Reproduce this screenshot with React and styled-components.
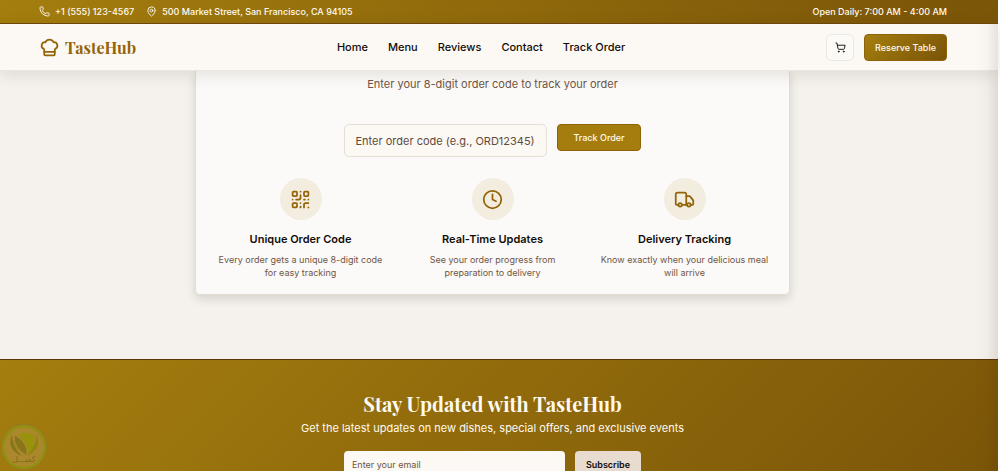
import styled, { createGlobalStyle } from "styled-components";
import {
  ChefHat,
  Clock,
  MapPin,
  Phone,
  QrCode,
  ShoppingCart,
  Truck,
} from "lucide-react";

const GlobalStyle = createGlobalStyle`
  * {
    box-sizing: border-box;
  }
  html {
    scrollbar-width: none;
  }
  body {
    margin: 0;
    background-color: #ffffff;
    color: #120d08;
    font-family: Inter, "Liberation Sans", sans-serif;
    font-size: 11px;
  }
  h2, h3, p {
    margin: 0;
  }
  a {
    color: inherit;
    text-decoration: none;
  }
  button, input {
    font-family: inherit;
  }
`;

const brandGradient = "linear-gradient(135deg, #a47e0e, #7a5408)";

const Page = styled.div`
  position: relative;
  margin-right: 2px;
  background-color: #f5f2ed;
`;

const EdgeShade = styled.div`
  position: fixed;
  top: 24px;
  right: 2px;
  bottom: 0;
  width: 24px;
  background: linear-gradient(to right, transparent, rgba(40, 30, 10, 0.02) 50%, rgba(40, 30, 10, 0.1));
  pointer-events: none;
`;

const TopBar = styled.div`
  display: flex;
  justify-content: space-between;
  align-items: center;
  height: 24px;
  padding: 0 51px 0 39px;
  border-bottom: 1px solid #70480c;
  background: ${brandGradient};
  color: #fffaf0;
  font-size: 9px;
  font-weight: 500;
`;

const Contacts = styled.div`
  display: flex;
  gap: 12px;
`;

const Contact = styled.a`
  display: flex;
  align-items: center;
  gap: 5px;
`;

const SHeader = styled.header`
  position: relative;
  display: flex;
  justify-content: space-between;
  align-items: center;
  height: 47px;
  padding: 0 51px 0 39px;
  border-bottom: 1px solid #ebe7de;
  background-color: #fcf9f5;
  box-shadow: 0 4px 16px rgba(50, 40, 20, 0.12);
`;

const Brand = styled.a`
  display: flex;
  align-items: center;
  gap: 5px;
  color: #946409;
  font-family: "Playfair Display", "Liberation Serif", serif;
  font-size: 16px;
  font-weight: 700;
`;

const Nav = styled.nav`
  display: flex;
  gap: 20px;
  font-weight: 500;
`;

const Actions = styled.div`
  display: flex;
  gap: 10px;
`;

const CartButton = styled.button`
  display: flex;
  align-items: center;
  justify-content: center;
  width: 28px;
  height: 27px;
  padding: 0;
  border: 1px solid #ece8e1;
  border-radius: 5px;
  background-color: #fcfaf7;
  color: #120d08;
`;

const Button = styled.button`
  height: 27px;
  padding: 0 ${(props) => props.$pad}px;
  border: 1px solid #8f620a;
  border-radius: 4px;
  background: ${(props) => props.$bg};
  color: #fffaf0;
  font-size: 9px;
  font-weight: 500;
`;

const TrackSection = styled.section`
  display: flex;
  justify-content: center;
  padding: 0 13px 64px 0;
`;

const Card = styled.div`
  width: 100%;
  max-width: 595px;
  padding: 5px 19px 15px;
  border: 1px solid #e2ddd3;
  border-top: none;
  border-radius: 0 0 5px 5px;
  background-color: #fcfaf9;
  box-shadow: 0 4px 10px rgba(50, 40, 20, 0.16);
  text-align: center;
`;

const Lead = styled.p`
  color: #6f5644;
  line-height: 16px;
`;

const TrackForm = styled.form`
  display: flex;
  justify-content: center;
  align-items: flex-start;
  gap: 10px;
  margin-top: 32px;
`;

const CodeInput = styled.input`
  width: 203px;
  height: 33px;
  padding: 0 10px;
  border: 1px solid #e6dfd5;
  border-radius: 5px;
  background-color: #fcf8f4;
  font-size: 11px;
  &::placeholder {
    color: #5f4a3c;
    opacity: 1;
  }
`;

const Features = styled.div`
  display: grid;
  grid-template-columns: repeat(3, 1fr);
  gap: 21px;
  margin-top: 21px;
`;

const Feature = styled.div`
  display: flex;
  flex-direction: column;
  align-items: center;
`;

const IconCircle = styled.div`
  display: flex;
  align-items: center;
  justify-content: center;
  width: 42px;
  height: 42px;
  border-radius: 50%;
  background-color: #f3ede0;
  color: #946409;
`;

const FeatureTitle = styled.h3`
  margin-top: 11px;
  font-size: 11px;
  font-weight: 600;
  line-height: 16px;
`;

const FeatureText = styled.p`
  margin-top: 6px;
  color: #6f5644;
  font-size: 9px;
  line-height: 13px;
`;

const Newsletter = styled.section`
  display: flex;
  flex-direction: column;
  align-items: center;
  padding: 31px 13px 43px 0;
  border-top: 1px solid #5c3408;
  background: ${brandGradient};
  color: #fffaf0;
`;

const NewsletterTitle = styled.h2`
  font-family: "Playfair Display", "Liberation Serif", serif;
  font-size: 20px;
  font-weight: 700;
  line-height: 26px;
`;

const NewsletterText = styled.p`
  line-height: 16px;
  margin-top: 3px;
`;

const NewsletterForm = styled.form`
  display: flex;
  gap: 10px;
  margin-top: 15px;
`;

const EmailInput = styled.input`
  width: 221px;
  height: 27px;
  padding: 0 8px;
  border: none;
  border-radius: 4px;
  background-color: #fcf9f4;
  font-size: 9px;
  &::placeholder {
    color: #6f5644;
    opacity: 1;
  }
`;

const SubscribeButton = styled.button`
  height: 27px;
  padding: 0 11px;
  border: none;
  border-radius: 4px;
  background-color: #e8dbd0;
  color: #120d08;
  font-size: 9px;
  font-weight: 600;
`;

const Seal = styled.svg`
  position: fixed;
  left: 0;
  bottom: 0;
  opacity: 0.7;
`;

const links = ["Home", "Menu", "Reviews", "Contact", "Track Order"];

const features = [
  {
    icon: QrCode,
    title: "Unique Order Code",
    text: "Every order gets a unique 8-digit code for easy tracking",
  },
  {
    icon: Clock,
    title: "Real-Time Updates",
    text: "See your order progress from preparation to delivery",
  },
  {
    icon: Truck,
    title: "Delivery Tracking",
    text: "Know exactly when your delicious meal will arrive",
  },
];

function App() {
  return (
    <Page>
      <GlobalStyle />
      <TopBar>
        <Contacts>
          <Contact href="tel:+15551234567">
            <Phone size={11} />
            +1 (555) 123-4567
          </Contact>
          <Contact href="#map">
            <MapPin size={11} />
            500 Market Street, San Francisco, CA 94105
          </Contact>
        </Contacts>
        <span>Open Daily: 7:00 AM - 4:00 AM</span>
      </TopBar>
      <SHeader>
        <Brand href="#home">
          <ChefHat size={21} />
          TasteHub
        </Brand>
        <Nav>
          {links.map((link) => (
            <a key={link} href={`#${link}`}>
              {link}
            </a>
          ))}
        </Nav>
        <Actions>
          <CartButton aria-label="Cart">
            <ShoppingCart size={11} />
          </CartButton>
          <Button $pad={10} $bg={brandGradient}>
            Reserve Table
          </Button>
        </Actions>
      </SHeader>
      <TrackSection>
        <Card>
          <Lead>Enter your 8-digit order code to track your order</Lead>
          <TrackForm>
            <CodeInput
              aria-label="Order code"
              placeholder="Enter order code (e.g., ORD12345)"
            />
            <Button type="button" $pad={15} $bg="#a57d0e">
              Track Order
            </Button>
          </TrackForm>
          <Features>
            {features.map(({ icon: Icon, title, text }) => (
              <Feature key={title}>
                <IconCircle>
                  <Icon size={21} />
                </IconCircle>
                <FeatureTitle>{title}</FeatureTitle>
                <FeatureText>{text}</FeatureText>
              </Feature>
            ))}
          </Features>
        </Card>
      </TrackSection>
      <Newsletter>
        <NewsletterTitle>Stay Updated with TasteHub</NewsletterTitle>
        <NewsletterText>
          Get the latest updates on new dishes, special offers, and exclusive
          events
        </NewsletterText>
        <NewsletterForm>
          <EmailInput
            type="email"
            aria-label="Email"
            placeholder="Enter your email"
          />
          <SubscribeButton type="button">Subscribe</SubscribeButton>
        </NewsletterForm>
      </Newsletter>
      <EdgeShade />
      <Seal width="48" height="48" viewBox="0 0 48 48" aria-hidden="true">
        <circle cx="24" cy="24" r="22.5" fill="#a88a30" stroke="#83822a" />
        <circle cx="24" cy="24" r="20.5" fill="#b08d3c" stroke="#8f9a10" strokeWidth="2" />
        <path d="M12 11.5C8 20 11 29 22 33C15 26 12.500 20 12 11.500Z" fill="#7c7420" />
        <path d="M36.500 11.500C40.500 20 37.500 29 26 33C33.500 26 36 20 36.500 11.500Z" fill="#868c12" />
        <path d="M18 12L25.500 9.500L34 12C35 20 33 26 28.500 29C27 22 24 16 18 12Z" fill="#93a00a" />
        <path d="M14 12.500C21 14 28 23 27 32C19 29 14 22 14 12.500Z" fill="#7c7420" stroke="#b08d3c" />
        <text
          x="24"
          y="39"
          textAnchor="middle"
          fontFamily="DejaVu Sans, sans-serif"
          fontSize="8"
          fill="#76681c"
        >
          كفيـــل
        </text>
      </Seal>
    </Page>
  );
}
export default App;
